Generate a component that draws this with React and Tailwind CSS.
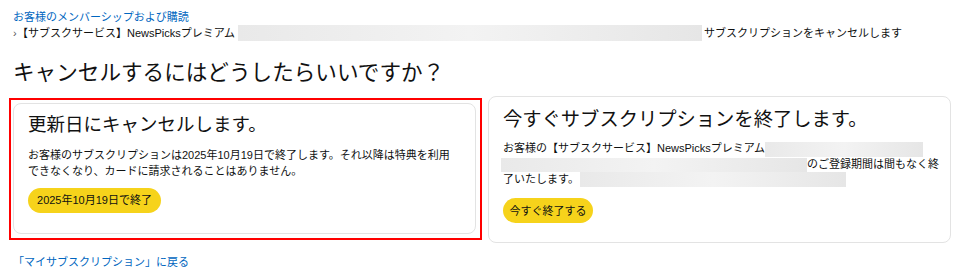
const Blur = ({ className }) => (
    <span
        className={`inline-block align-middle bg-gradient-to-r from-[#e9e9e9] via-[#f3f3f3] to-[#e6e6e6] ${className}`}
    />
);

const App = () => {
    return (
        <div
            className="w-[960px] h-[275px] bg-white text-[#0f1111] overflow-hidden"
            style={{ fontFamily: '"Liberation Sans", "Noto Sans CJK JP", sans-serif' }}
        >
            <div className="pl-[13px] pt-[9px] text-[11px] leading-[16px]">
                <a className="block text-[#0066c0]">お客様のメンバーシップおよび購読</a>
                <div className="flex items-center whitespace-nowrap">
                    <span className="w-[4px] text-[#555]">›</span>
                    <span>【サブスクサービス】NewsPicksプレミアム</span>
                    <Blur className="w-[464px] h-[16px] ml-[3px] mr-[2px]" />
                    <span>サブスクリプションをキャンセルします</span>
                </div>
            </div>

            <h1 className="pl-[13px] mt-[18px] text-[21.6px] leading-[28px] text-[#111]">
                キャンセルするにはどうしたらいいですか？
            </h1>

            <div className="flex items-start pl-[9px] mt-[9px]">
                {/* left option, outlined in red */}
                <div className="mt-[2px] border-2 border-[#ff0000] pl-[2px] pr-[4px] pt-[3px] pb-[4px]">
                    <div className="w-[463px] border border-[#e3e3e3] rounded-[8px] px-[14px] pt-[9px] pb-[20px]">
                        <h2 className="text-[18.5px] leading-[24px] text-[#111]">更新日にキャンセルします。</h2>
                        <p className="mt-[10px] text-[11px] leading-[16px]">
                            お客様のサブスクリプションは2025年10月19日で終了します。それ以降は特典を利用
                            <br />
                            できなくなり、カードに請求されることはありません。
                        </p>
                        <button className="mt-[9px] w-[133px] h-[25px] rounded-full bg-[#f6d31b] text-[11px] text-[#0f1111]">
                            2025年10月19日で終了
                        </button>
                    </div>
                </div>

                <div className="ml-[6px] w-[463px] border border-[#e3e3e3] rounded-[8px] px-[14px] pt-[10px] pb-[19px]">
                    <h2 className="text-[19.3px] leading-[26px] text-[#111]">今すぐサブスクリプションを終了します。</h2>
                    <div className="mt-[8px] text-[11px] leading-[15px] whitespace-nowrap">
                        <div>
                            お客様の【サブスクサービス】NewsPicksプレミアム
                            <Blur className="w-[158px] h-[15px]" />
                        </div>
                        <div className="-ml-[2px]">
                            <Blur className="w-[306px] h-[14px]" />
                            のご登録期間は間もなく終
                        </div>
                        <div>
                            了いたします。
                            <Blur className="w-[266px] h-[15px] ml-[1px]" />
                        </div>
                    </div>
                    <button className="mt-[11px] w-[90px] h-[25px] rounded-full bg-[#f6d31b] text-[11px] text-[#0f1111]">
                        今すぐ終了する
                    </button>
                </div>
            </div>

            <a className="block pl-[13px] mt-[11px] text-[11px] leading-[16px] text-[#0066c0]">
                「マイサブスクリプション」に戻る
            </a>
        </div>
    );
};

export default App;
